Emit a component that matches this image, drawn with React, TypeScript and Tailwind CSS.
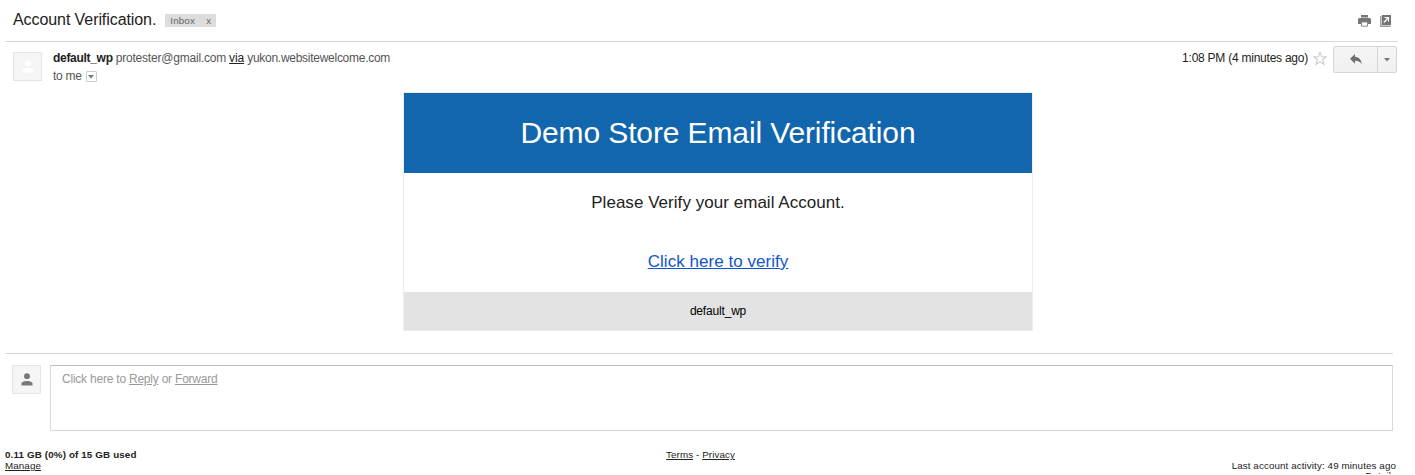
function Person({ className }: { className: string }) {
  return (
    <svg width="12" height="13" viewBox="0 0 12 13" className={className} fill="currentColor">
      <circle cx="6" cy="3.2" r="2.9" />
      <path d="M.5 12.500V10.500C.5 8.700 3.500 7.900 6 7.900S11.500 8.700 11.500 10.500V12.500Z" />
    </svg>
  );
}

function Caret() {
  return (
    <svg width="6" height="4" viewBox="0 0 6 4" fill="#777">
      <path d="M0 0h6L3 3.500z" />
    </svg>
  );
}

function TitleBar() {
  return (
    <header className="ml-[5px] mr-[17px] flex h-[42px] items-start border-b border-[#d8d8d8] pl-2">
      <h1 className="mt-[10px] text-[16px] leading-5 tracking-[-0.08px] text-[#222]">Account Verification.</h1>
      <div className="ml-[9px] mt-[14px] flex h-[13px] w-[51px] items-center bg-[#ddd] pl-[5px] pr-[5px] text-[9.8px] leading-[13px] tracking-[0.15px] text-[#666]">
        <span>Inbox</span>
        <span className="ml-auto">x</span>
      </div>
      <div className="ml-auto mr-[6px] mt-[15px] flex items-start gap-[9px]">
        <svg width="13" height="12" viewBox="0 0 13 12" fill="#777">
          <path d="M3 0h7v2.500H3zM1.500 3h10A1.500 1.500 0 0 1 13 4.500V9h-3V7H3v2H0V4.500A1.500 1.500 0 0 1 1.500 3z" />
          <path d="M3.500 7h6v4.200h-6z" fill="#fff" stroke="#888" />
        </svg>
        <svg width="12" height="12" viewBox="0 0 12 12">
          <path d="M.8 1v10.200h9.700" fill="none" stroke="#999" strokeWidth="1.400" />
          <path d="M2 0h9v10H2z" fill="#747474" />
          <path d="M4.500 2.500h4V6.500M8.500 2.500L3.800 7.500" fill="none" stroke="#fff" strokeWidth="1.200" />
        </svg>
      </div>
    </header>
  );
}

function MessageHeader() {
  return (
    <section className="flex h-[50px] items-start pl-[13px] pr-[18px] text-[12px] leading-[18px]">
      <div className="mt-[10px] flex size-[29px] items-center justify-center border border-[#e5e5e5] bg-[#f5f5f5]">
        <Person className="text-white" />
      </div>
      <div className="ml-[11px] mt-[7px] text-[#555]">
        <div className="flex gap-[3px] whitespace-nowrap">
          <b className="tracking-[-0.3px] text-[#222]">default_wp</b>
          <span className="tracking-[-0.2px]">protester@gmail.com</span>
          <span className="tracking-[-0.1px] text-[#222] underline">via</span>
          <span className="tracking-[-0.27px]">yukon.websitewelcome.com</span>
        </div>
        <div className="flex items-center">
          <span className="tracking-[-0.25px]">to me</span>
          <span className="ml-1 mt-[1px] flex h-[11px] w-[11px] items-center justify-center rounded-[1px] border border-[#ccc]">
            <Caret />
          </span>
        </div>
      </div>
      <span className="ml-auto mt-[7px] tracking-[-0.24px] text-[#222]">1:08 PM (4 minutes ago)</span>
      <svg width="14" height="14" viewBox="0 0 14 14" className="ml-[5px] mt-[9px]" fill="none" stroke="#d0d0d0" strokeWidth="1.200">
        <path d="M7 1.300l1.600 4.300 4.700.2-3.700 2.900 1.400 4.700L7 10.700l-4 2.700 1.400-4.700L.7 5.800l4.700-.2z" />
      </svg>
      <div className="ml-[6px] mt-1 flex h-[27px] w-16 rounded-[2px] border border-[#d5d5d5] bg-gradient-to-b from-[#f5f5f5] to-[#f0f0f0]">
        <div className="flex w-[43px] items-center justify-center">
          <svg width="12" height="11" viewBox="0 0 12 11" fill="#707070">
            <path d="M5 0v2.800c4 .4 6.300 3 6.800 7.500C10 7.700 8 6.800 5 6.800V9.700L0 4.800z" />
          </svg>
        </div>
        <div className="flex flex-1 items-center justify-center border-l border-[#d5d5d5]">
          <Caret />
        </div>
      </div>
    </section>
  );
}

function MessageBody() {
  return (
    <main className="ml-[403px] h-[239px] w-[630px] border border-[#ececec] text-center">
      <h2 className="h-20 bg-[#1266ae] text-[30px] leading-20 tracking-[-0.12px] text-white">Demo Store Email Verification</h2>
      <div className="h-[119px] pt-[20px] text-[17px] leading-5 tracking-[0.04px] text-[#222]">
        <p>Please Verify your email Account.</p>
        <p className="mt-[39px]">
          <a className="text-[#1155cc] underline">Click here to verify</a>
        </p>
      </div>
      <div className="h-[38px] bg-[#e3e3e3] text-[12px] leading-[38px] tracking-[-0.18px] text-black">default_wp</div>
    </main>
  );
}

function ReplyBox() {
  return (
    <section className="ml-[5px] mr-[22px] mt-[22px] flex h-[79px] border-t border-[#d8d8d8] pl-[7px] pt-[11px]">
      <div className="flex size-[29px] items-center justify-center border border-[#e5e5e5] bg-[#f5f5f5]">
        <Person className="text-[#777]" />
      </div>
      <div className="ml-[9px] h-[66px] flex-1 border border-[#d9d9d9] border-t-[#c0c0c0] pl-[11px] pt-1 text-[12px] leading-[18px] tracking-[-0.22px] text-[#999]">
        Click here to <a className="underline">Reply</a> or <a className="underline">Forward</a>
      </div>
    </section>
  );
}

function Footer() {
  return (
    <footer className="mt-[17px] grid h-[25px] grid-cols-3 overflow-hidden pl-[5px] pr-[19px] text-[9.8px] leading-[11px] tracking-[0.1px] text-[#222]">
      <div>
        <b className="block tracking-[0.14px]">0.11 GB (0%) of 15 GB used</b>
        <a className="underline">Manage</a>
      </div>
      <div className="text-center">
        <a className="underline">Terms</a> - <a className="underline">Privacy</a>
      </div>
      <div className="pt-[11px] text-right">
        <p>Last account activity: 49 minutes ago</p>
        <p className="-mt-px">Details</p>
      </div>
    </footer>
  );
}

export default function App() {
  return (
    <div className="h-[475px] w-[1415px] overflow-hidden bg-white font-['Liberation_Sans',Arial,sans-serif]">
      <TitleBar />
      <MessageHeader />
      <MessageBody />
      <ReplyBox />
      <Footer />
    </div>
  );
}
